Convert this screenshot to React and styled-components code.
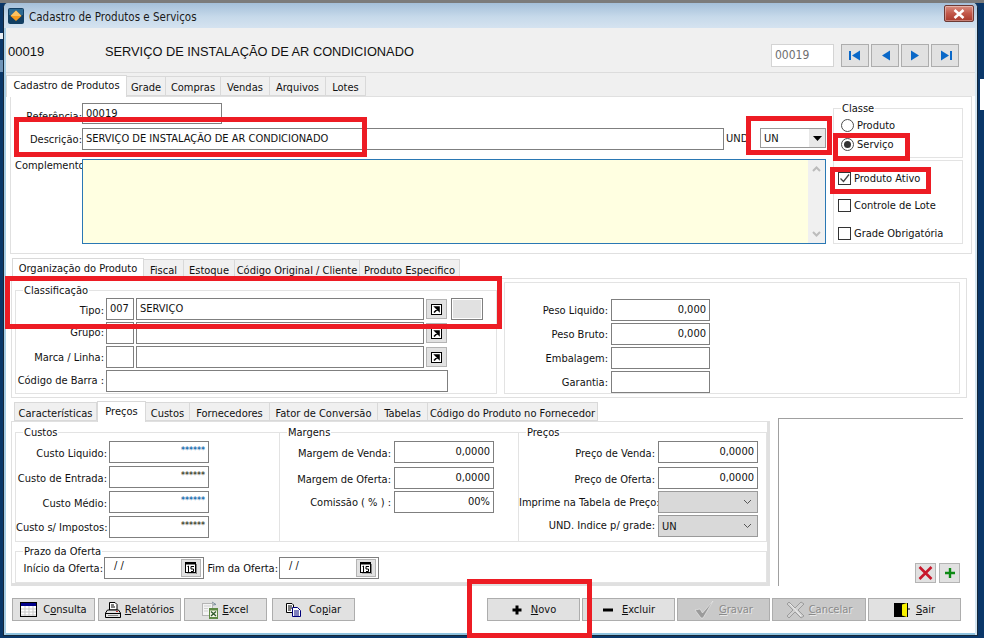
import React from "react";
import styled, { createGlobalStyle } from "styled-components";

const GlobalStyle = createGlobalStyle`
  html, body {
    margin: 0;
    padding: 0;
    overflow: hidden;
  }
  body {
    font-family: "DejaVu Sans Condensed", "DejaVu Sans", sans-serif;
    font-size: 11px;
    color: #111;
  }
`;

const Page = styled.div`
  position: relative;
  width: 984px;
  height: 638px;
  overflow: hidden;
  box-sizing: border-box;
  padding: 3px 0 0 3px;
  background:
    linear-gradient(#fff, #fff) 980px 79px / 4px 31px no-repeat,
    linear-gradient(#e8eef4, #e8eef4) 0 33px / 3px 6px no-repeat,
    linear-gradient(#6f94b8, #6f94b8) 0 60px / 3px 12px no-repeat,
    linear-gradient(#7b7b7b 3px, #0a3769 3px);
`;

const Win = styled.div`
  width: 975px;
  height: 633px;
  box-sizing: border-box;
  border: 1px solid #16283a;
  border-top: 0;
  background: #fff;
  display: flex;
  flex-direction: column;
  border-radius: 5px 5px 0 0;
  box-shadow: inset 2px 0 0 #a9cfe6, inset -2px 0 0 #d4e6f2, inset 0 -2px 0 #8fc3e0;
`;

const TitleBar = styled.div`
  height: 25px;
  flex: none;
  display: flex;
  align-items: center;
  padding: 0 3px 0 4px;
  border-radius: 5px 5px 0 0;
  background: linear-gradient(#a4bfd9, #c6d9ea 55%, #d5e3f0);
`;

const TitleText = styled.span`
  margin: 2px 0 0 5px;
  font-size: 11.5px;
  color: #1a1a1a;
  flex: 1;
`;

const CloseBtn = styled.div`
  width: 30px;
  height: 17px;
  margin-top: -4px;
  box-sizing: border-box;
  border: 1px solid #6d3a34;
  border-radius: 2px;
  background: linear-gradient(#d88e80, #c2584a 50%, #a83a2c);
  display: flex;
  align-items: center;
  justify-content: center;
  box-shadow: inset 0 0 0 1px rgba(255, 255, 255, 0.35);
`;

const Client = styled.div`
  flex: 1;
  margin: 0 2px 2px;
  display: flex;
  flex-direction: column;
  min-height: 0;
`;

const Header = styled.div`
  height: 45px;
  flex: none;
  box-sizing: border-box;
  display: flex;
  align-items: center;
  padding: 3px 16px 0 2px;
  background: #f0f0f0;
  border-bottom: 1px solid #dcdcdc;
`;

const Code = styled.span`
  width: 97px;
  font-family: "Liberation Sans", sans-serif;
  font-size: 13px;
`;

const ProductName = styled.span`
  flex: 1;
  font-family: "Liberation Sans", sans-serif;
  font-size: 12.8px;
`;

const RecordBox = styled.div`
  width: 63px;
  height: 23px;
  box-sizing: border-box;
  margin: 8px 7px 0 0;
  border: 1px solid #d4d4d4;
  background: #fff;
  color: #6e6e6e;
  font-size: 12px;
  line-height: 21px;
  padding-left: 3px;
`;

const NavGroup = styled.div`
  display: flex;
  gap: 2px;
  margin-top: 8px;
`;

const NavBtn = styled.div`
  width: 28px;
  height: 23px;
  box-sizing: border-box;
  border: 1px solid #adadad;
  background: #e1e1e1;
  display: flex;
  align-items: center;
  justify-content: center;
`;

const TabStrip = styled.div`
  flex: none;
  height: ${p => p.$h}px;
  margin-top: ${p => p.$top || 0}px;
  display: flex;
  align-items: flex-end;
  padding-left: ${p => p.$left || 0}px;
  background: ${p => p.$bg || "transparent"};
  position: relative;
  z-index: 1;
`;

const Tab = styled.div`
  width: ${p => p.$w}px;
  box-sizing: border-box;
  height: ${p => (p.$active ? p.$tall : p.$tall - 2)}px;
  margin-bottom: ${p => (p.$active ? -1 : 0)}px;
  padding-top: ${p => (p.$active ? 3 : 4)}px;
  border: 1px solid #d9d9d9;
  border-bottom: ${p => (p.$active ? "0" : "1px solid #d9d9d9")};
  border-left: ${p => (p.$active || p.$first ? "1px solid #d9d9d9" : "0")};
  background: ${p => (p.$active ? "#fff" : "#f0f0f0")};
  text-align: center;
  white-space: nowrap;
`;

const MainPanel = styled.div`
  flex: none;
  margin-left: 4px;
  width: 962px;
  height: 158px;
  box-sizing: border-box;
  border: 1px solid #e0e0e0;
  display: flex;
`;

const MainLeft = styled.div`
  width: 816px;
  flex: none;
`;

const MainRight = styled.div`
  width: 130px;
  margin: 11px 0 0 6px;
  flex: none;
`;

const Row = styled.div`
  display: flex;
  gap: ${p => (p.$gap === undefined ? 2 : p.$gap)}px;
  margin-top: ${p => p.$top || 0}px;
`;

const Label = styled.span`
  width: ${p => p.$w}px;
  flex: none;
  box-sizing: border-box;
  text-align: ${p => p.$left ? "left" : "right"};
  padding-left: ${p => (p.$left ? 4 : 0)}px;
  line-height: 14px;
  margin-top: ${p => (p.$dy === undefined ? 5 : p.$dy)}px;
  white-space: nowrap;
`;

const Field = styled.div`
  width: ${p => p.$w}px;
  height: ${p => p.$h || 22}px;
  flex: none;
  box-sizing: border-box;
  border: 1px solid #7f7f7f;
  margin-left: ${p => p.$mleft || 0}px;
  background: #fff;
  padding: 3px 3px 0;
  line-height: 14px;
  text-align: ${p => p.$right ? "right" : "left"};
  white-space: nowrap;
`;

const Stars = styled.span`
  display: block;
  margin-top: -2px;
  font-size: 8.5px;
  font-weight: bold;
  color: ${p => p.$color};
`;

const DropSelect = styled.div`
  width: ${p => p.$w}px;
  height: ${p => p.$h}px;
  flex: none;
  box-sizing: border-box;
  border: 1px solid #9a9a9a;
  background: ${p => p.$bg};
  display: flex;
  align-items: center;
  justify-content: space-between;
  padding: 0 ${p => p.$pad}px 0 3px;
`;

const BlackArrow = styled.div`
  width: 16px;
  height: 100%;
  background: #e8e8e8;
  display: flex;
  align-items: center;
  justify-content: center;
`;

const UndLabel = styled.span`
  width: 34px;
  flex: none;
  margin-top: 4px;
  line-height: 14px;
`;

const MemoRow = styled.div`
  display: flex;
  margin-top: 9px;
`;

const Memo = styled.div`
  width: 744px;
  height: 85px;
  box-sizing: border-box;
  border: 1px solid #2a78b4;
  background: #ffffe1;
  display: flex;
  justify-content: flex-end;
`;

const MemoScroll = styled.div`
  width: 17px;
  background: #f0f0f0;
  display: flex;
  flex-direction: column;
  justify-content: space-between;
  align-items: center;
  padding: 6px 0;
`;

const Group = styled.div`
  position: relative;
  box-sizing: border-box;
  width: ${p => (p.$w ? p.$w + "px" : "auto")};
  height: ${p => p.$h}px;
  flex: none;
  border: 1px solid #e3e3e3;
  margin-top: ${p => p.$top || 0}px;
  margin-left: ${p => p.$mleft || 0}px;
  padding-top: ${p => p.$pt || 0}px;
`;

const Legend = styled.span`
  position: absolute;
  top: -7px;
  left: 7px;
  background: #fff;
  padding: 0 1px;
  line-height: 13px;
`;

const Radio = styled.span`
  width: 13px;
  height: 13px;
  flex: none;
  box-sizing: border-box;
  border: 1px solid #4d4d4d;
  border-radius: 50%;
  background: #fff;
  display: flex;
  align-items: center;
  justify-content: center;
  &::after {
    content: "";
    width: 7px;
    height: 7px;
    border-radius: 50%;
    background: ${p => (p.$on ? "#333" : "transparent")};
  }
`;

const Check = styled.span`
  width: 13px;
  height: 13px;
  flex: none;
  box-sizing: border-box;
  border: 1px solid #333;
  background: #fff;
  display: flex;
  align-items: center;
  justify-content: center;
`;

const OptionRow = styled.div`
  display: flex;
  align-items: center;
  gap: 3px;
  margin-left: ${p => p.$x}px;
  margin-top: ${p => p.$top}px;
  line-height: 13px;
`;

const SubPanel = styled.div`
  flex: none;
  margin-left: 5px;
  width: 956px;
  height: 120px;
  box-sizing: border-box;
  border: 1px solid #e0e0e0;
  padding: 3px;
  display: flex;
  gap: 7px;
`;

const SmallBtn = styled.div`
  width: 21px;
  height: 20px;
  flex: none;
  box-sizing: border-box;
  margin-top: 1px;
  border: 1px solid #b4b4b4;
  background: #e1e1e1;
  display: flex;
  align-items: center;
  justify-content: center;
`;

const ColorBox = styled.div`
  width: 32px;
  height: 22px;
  flex: none;
  margin-left: 2px;
  box-sizing: border-box;
  border: 1px solid #7f7f7f;
  background: #e1e1e1;
  box-shadow: inset 0 0 0 1px #fff;
`;

const LowerArea = styled.div`
  flex: none;
  display: flex;
  margin: 2px 0 0 5px;
`;

const LowerLeft = styled.div`
  width: 759px;
  flex: none;
`;

const PricePanel = styled.div`
  height: 165px;
  box-sizing: border-box;
  border: 1px solid #e0e0e0;
  border-right-width: 3px;
  border-bottom-width: 3px;
  padding: 10px 0 0 3px;
`;

const PriceGroups = styled.div`
  display: flex;
`;

const PhotoBox = styled.div`
  width: 185px;
  height: 168px;
  flex: none;
  margin: 18px 0 0 8px;
  box-sizing: border-box;
  border-top: 1px solid #a0a0a0;
  border-left: 1px solid #a0a0a0;
  display: flex;
  align-items: flex-end;
  justify-content: flex-end;
  gap: 3px;
  padding: 0 3px 3px 0;
`;

const PhotoBtn = styled.div`
  width: 21px;
  height: 20px;
  box-sizing: border-box;
  border: 1px solid #b4b4b4;
  background: #e1e1e1;
  display: flex;
  align-items: center;
  justify-content: center;
`;

const DateField = styled.div`
  width: 100px;
  height: 22px;
  flex: none;
  box-sizing: border-box;
  border: 1px solid #7f7f7f;
  background: #fff;
  display: flex;
  justify-content: space-between;
  padding: 1px 2px 0 9px;
  line-height: 14px;
`;

const CalBtn = styled.div`
  width: 20px;
  height: 18px;
  box-sizing: border-box;
  border: 1px solid #b4b4b4;
  background: #e1e1e1;
  display: flex;
  align-items: center;
  justify-content: center;
`;

const Toolbar = styled.div`
  flex: none;
  display: flex;
  justify-content: space-between;
  margin-top: 12px;
  padding: 0 14px 0 6px;
`;

const BtnGroup = styled.div`
  display: flex;
  gap: ${p => p.$gap}px;
`;

const Btn = styled.div`
  width: ${p => p.$w || 93}px;
  height: 23px;
  margin-left: ${p => p.$mleft || 0}px;
  box-sizing: border-box;
  border: 1px solid #adadad;
  background: ${p => (p.$off ? "#c9c9c9" : "#e1e1e1")};
  color: ${p => (p.$off ? "#8a8a8a" : "#111")};
  text-shadow: ${p => (p.$off ? "1px 1px 0 #e8e8e8" : "none")};
  display: flex;
  align-items: center;
  justify-content: center;
  gap: ${p => p.$gap === undefined ? 5 : p.$gap}px;
`;

const Mark = styled.div`
  position: absolute;
  left: ${p => p.$x}px;
  top: ${p => p.$y}px;
  width: ${p => p.$w}px;
  height: ${p => p.$h}px;
  box-sizing: border-box;
  border: 5px solid #ed1c24;
  pointer-events: none;
  z-index: 5;
`;

const Svg = ({ w, h, children }) => (
  <svg width={w} height={h} viewBox={`0 0 ${w} ${h}`} style={{ display: "block", flex: "none" }}>
    {children}
  </svg>
);

const AppIcon = () => (
  <Svg w={16} h={16}>
    <rect width="16" height="16" rx="2" fill="#123f63" />
    <rect x="1" y="1" width="14" height="6" fill="#2d6a92" />
    <path d="M8 2.5 13.5 8 8 13 2.5 8Z" fill="#f59a1d" />
    <path d="M8 2.5 13.5 8H2.5Z" fill="#fbc160" />
  </Svg>
);

const CloseIcon = () => (
  <Svg w={12} h={10}>
    <path d="M1.5 1 10.5 9M10.5 1 1.5 9" stroke="#fff" strokeWidth="2.6" />
  </Svg>
);

const NavIcon = ({ dir, stop }) => (
  <Svg w={13} h={11}>
    {dir === "left" ? (
      <>
        {stop && <rect x="0" y="1" width="2" height="9" fill="#0a68c8" />}
        <path d="M3 5.5 11 .5V10.5Z" fill="#0a68c8" />
      </>
    ) : (
      <>
        <path d="M10 5.5 2 .5V10.5Z" fill="#0a68c8" />
        {stop && <rect x="11" y="1" width="2" height="9" fill="#0a68c8" />}
      </>
    )}
  </Svg>
);

const LookupIcon = () => (
  <Svg w={11} h={11}>
    <rect x=".5" y=".5" width="10" height="10" fill="#fff" stroke="#000" />
    <path d="M3 8.5 7.2 4.2M4.2 3H8V6.8Z" stroke="#000" strokeWidth="1.6" fill="#000" />
  </Svg>
);

const TriDown = () => (
  <Svg w={9} h={5}>
    <path d="M0 0H9L4.5 5Z" fill="#000" />
  </Svg>
);

const Chevron = () => (
  <Svg w={9} h={6}>
    <path d="M1 1 4.5 4.5 8 1" fill="none" stroke="#555" />
  </Svg>
);

const ScrollArrow = ({ up }) => (
  <Svg w={9} h={6}>
    <path d={up ? "M1 5 4.5 1.5 8 5" : "M1 1 4.5 4.5 8 1"} fill="none" stroke="#bcbcbc" strokeWidth="2" />
  </Svg>
);

const Tick = () => (
  <Svg w={11} h={11}>
    <path d="M1.5 5.5 4.5 8.5 10 1.5" fill="none" stroke="#444" strokeWidth="1.3" />
  </Svg>
);

const CalIcon = () => (
  <Svg w={12} h={12}>
    <rect x=".5" y=".5" width="10" height="10" fill="#fff" stroke="#000" />
    <rect x="0" y="0" width="11" height="2.5" fill="#000" />
    <path d="M2.5 4.5 3.5 4V10M6 4.5H9M6 4.5V7H8.5V9.5H6" fill="none" stroke="#000" />
    <path d="M11.5 2V12H2" fill="none" stroke="#808080" />
  </Svg>
);

const TableIcon = () => (
  <Svg w={17} h={15}>
    <rect x=".5" y=".5" width="16" height="14" fill="#fff" stroke="#000" />
    <rect x="1" y="1" width="15" height="3" fill="#00008a" />
    <path d="M1 7H16M1 10H16M1 13H16M5 4V14M9 4V14M13 4V14" stroke="#c9c9c9" />
  </Svg>
);

const PrinterIcon = () => (
  <Svg w={16} h={16}>
    <path d="M4.5.5H10L12 2.5V8H4.5Z" fill="#fff" stroke="#000" />
    <path d="M6 3H9M6 5H10" stroke="#000" />
    <path d="M2.5 8H13.5L15.5 11V15.5H.5V11Z" fill="#e4e4e4" stroke="#000" />
    <path d="M1 11.5H15" stroke="#000" />
    <path d="M11 9.5H13" stroke="#d03030" />
    <path d="M3 13.5H13" stroke="#888" />
  </Svg>
);

const ExcelIcon = () => (
  <Svg w={16} h={18}>
    <rect x=".5" y="2.5" width="10" height="12" fill="#f4f4f4" stroke="#b5b5b5" />
    <path d="M2 5H9M2 7.5H6M2 10H6" stroke="#cfcfcf" />
    <path d="M10 1 14 3.5 11 4" fill="none" stroke="#7d8f9e" />
    <rect x="7" y="7" width="9" height="11" fill="#5f8a45" />
    <rect x="8" y="9.5" width="7" height="6.5" fill="#f5f5e8" />
    <path d="M9 10.5 14 15M14 10.5 9 15" stroke="#2f5a2a" strokeWidth="1.3" />
  </Svg>
);

const CopyIcon = () => (
  <Svg w={15} h={14}>
    <path d="M.5.5H6L7.5 2V9.5H.5Z" fill="#fff" stroke="#000" />
    <path d="M2 3H6M2 5H6M2 7H5" stroke="#000" />
    <path d="M6.5 4.5H11.5L14.5 7.5V13.5H6.5Z" fill="#fff" stroke="#00007a" />
    <path d="M8 8H13M8 10H13M8 12H13" stroke="#00007a" />
  </Svg>
);

const PlusIcon = () => (
  <Svg w={12} h={12}>
    <path d="M6 1.5V10.5M1.5 6H10.5" stroke="#000" strokeWidth="3" />
  </Svg>
);

const MinusIcon = () => (
  <Svg w={12} h={12}>
    <path d="M1 6H11" stroke="#000" strokeWidth="3" />
  </Svg>
);

const GrayCheck = () => (
  <Svg w={21} h={19}>
    <path d="M1 10 6 9 8.5 13 19 1 9 18H7Z" fill="#9b9b9b" stroke="#ececec" strokeWidth=".6" />
  </Svg>
);

const GrayCross = () => (
  <Svg w={19} h={18}>
    <path d="M3 1 9 7 15 1 18 3 12 9 18 15 15 17 9 11 3 17 1 15 7 9 1 3Z" fill="#d0d0d0" stroke="#8f8f8f" strokeWidth=".8" />
    <path d="M4 3 15 15" stroke="#f3f3f3" />
  </Svg>
);

const DoorIcon = () => (
  <Svg w={16} h={14}>
    <rect x="0" y="0" width="13" height="14" fill="#000" />
    <path d="M8 1.5 13 0V14L8 12.5Z" fill="#f7f000" />
    <rect x="13" y="0" width="1" height="14" fill="#000" />
    <path d="M14 6H16" stroke="#000" />
  </Svg>
);

const RedX = () => (
  <Svg w={15} h={14}>
    <path d="M1.5 1 13.5 13M13.5 1 1.5 13" stroke="#c8182c" strokeWidth="2.6" />
  </Svg>
);

const GreenPlus = () => (
  <Svg w={12} h={12}>
    <path d="M6 1V11M1 6H11" stroke="#0d8a14" strokeWidth="2.4" />
  </Svg>
);

const mainTabs = [
  ["Cadastro de Produtos", 121, true],
  ["Grade", 39],
  ["Compras", 55],
  ["Vendas", 49],
  ["Arquivos", 56],
  ["Lotes", 40]
];

const subTabs = [
  ["Organização do Produto", 132, true],
  ["Fiscal", 40],
  ["Estoque", 51],
  ["Código Original / Cliente", 125],
  ["Produto Especifico", 100]
];

const priceTabs = [
  ["Características", 83],
  ["Preços", 49, true],
  ["Custos", 44],
  ["Fornecedores", 80],
  ["Fator de Conversão", 108],
  ["Tabelas", 50],
  ["Código do Produto no Fornecedor", 170]
];

const marks = [
  [14, 117, 353, 40],
  [746, 116, 86, 39],
  [833, 133, 77, 28],
  [830, 167, 101, 27],
  [5, 276, 497, 53],
  [467, 579, 125, 59]
];

const Tabs = ({ items, tall }) =>
  items.map(([text, w, active], i) => (
    <Tab key={text} $w={w} $active={active} $tall={tall} $first={i === 0}>
      {text}
    </Tab>
  ));

const App = () => (
  <Page>
    <GlobalStyle />
    <Win>
      <TitleBar>
        <AppIcon />
        <TitleText>Cadastro de Produtos e Serviços</TitleText>
        <CloseBtn>
          <CloseIcon />
        </CloseBtn>
      </TitleBar>
      <Client>
        <Header>
          <Code>00019</Code>
          <ProductName>SERVIÇO DE INSTALAÇÃO DE AR CONDICIONADO</ProductName>
          <RecordBox>00019</RecordBox>
          <NavGroup>
            <NavBtn><NavIcon dir="left" stop /></NavBtn>
            <NavBtn><NavIcon dir="left" /></NavBtn>
            <NavBtn><NavIcon dir="right" /></NavBtn>
            <NavBtn><NavIcon dir="right" stop /></NavBtn>
          </NavGroup>
        </Header>

        <TabStrip $h={23} $bg="#f0f0f0">
          <Tabs items={mainTabs} tall={22} />
        </TabStrip>
        <MainPanel>
          <MainLeft>
            <Row $top={6} $gap={0}>
              <Label $w={71} $dy={7}>Referência:</Label>
              <Field $w={140} $h={21}>00019</Field>
            </Row>
            <Row $top={4} $gap={0}>
              <Label $w={71}>Descrição:</Label>
              <Field $w={642}>SERVIÇO DE INSTALAÇÃO DE AR CONDICIONADO</Field>
              <Label $w={2} $dy={0} />
              <UndLabel>UND:</UndLabel>
              <DropSelect $w={66} $h={20} $bg="#fff" $pad={0}>
                UN
                <BlackArrow><TriDown /></BlackArrow>
              </DropSelect>
            </Row>
            <MemoRow>
              <Label $w={71} $left $dy={0}>Complemento:</Label>
              <Memo>
                <MemoScroll>
                  <ScrollArrow up />
                  <ScrollArrow />
                </MemoScroll>
              </Memo>
            </MemoRow>
          </MainLeft>
          <MainRight>
            <Group $h={50} $pt={3}>
              <Legend>Classe</Legend>
              <OptionRow $x={7} $top={7}><Radio />Produto</OptionRow>
              <OptionRow $x={7} $top={6}><Radio $on />Serviço</OptionRow>
            </Group>
            <Group $h={84} $top={2}>
              <OptionRow $x={4} $top={11}><Check><Tick /></Check>Produto Ativo</OptionRow>
              <OptionRow $x={4} $top={14}><Check />Controle de Lote</OptionRow>
              <OptionRow $x={4} $top={15}><Check />Grade Obrigatória</OptionRow>
            </Group>
          </MainRight>
        </MainPanel>

        <TabStrip $h={20} $left={6} $top={4}>
          <Tabs items={subTabs} tall={21} />
        </TabStrip>
        <SubPanel>
          <Group $w={482} $h={104} $pt={7} $top={8}>
            <Legend>Classificação</Legend>
            <Row>
              <Label $w={88} $dy={6}>Tipo:</Label>
              <Field $w={28}>007</Field>
              <Field $w={288}>SERVIÇO</Field>
              <SmallBtn><LookupIcon /></SmallBtn>
              <ColorBox />
            </Row>
            <Row $top={2}>
              <Label $w={88} $dy={4}>Grupo:</Label>
              <Field $w={28} />
              <Field $w={288} />
              <SmallBtn><LookupIcon /></SmallBtn>
            </Row>
            <Row $top={2}>
              <Label $w={88}>Marca / Linha:</Label>
              <Field $w={28} />
              <Field $w={288} />
              <SmallBtn><LookupIcon /></SmallBtn>
            </Row>
            <Row $top={2}>
              <Label $w={88} $dy={4}>Código de Barra :</Label>
              <Field $w={342} />
            </Row>
          </Group>
          <Group $w={456} $h={112} $pt={16}>
            <Row $gap={3}>
              <Label $w={103}>Peso Liquido:</Label>
              <Field $w={99} $right>0,000</Field>
            </Row>
            <Row $top={2} $gap={3}>
              <Label $w={103}>Peso Bruto:</Label>
              <Field $w={99} $right>0,000</Field>
            </Row>
            <Row $top={2} $gap={3}>
              <Label $w={103}>Embalagem:</Label>
              <Field $w={99} />
            </Row>
            <Row $top={2} $gap={3}>
              <Label $w={103}>Garantia:</Label>
              <Field $w={99} />
            </Row>
          </Group>
        </SubPanel>

        <LowerArea>
          <LowerLeft>
            <TabStrip $h={21} $left={3}>
              <Tabs items={priceTabs} tall={21} />
            </TabStrip>
            <PricePanel>
              <PriceGroups>
                <Group $w={265} $h={110} $pt={8}>
                  <Legend>Custos</Legend>
                  <Row>
                    <Label $w={91} $dy={6}>Custo Liquido:</Label>
                    <Field $w={100} $right><Stars $color="#1f6db0">******</Stars></Field>
                  </Row>
                  <Row $top={3}>
                    <Label $w={91} $dy={6}>Custo de Entrada:</Label>
                    <Field $w={100} $right><Stars $color="#4a4a3a">******</Stars></Field>
                  </Row>
                  <Row $top={3}>
                    <Label $w={91} $dy={6}>Custo Médio:</Label>
                    <Field $w={100} $right><Stars $color="#1f6db0">******</Stars></Field>
                  </Row>
                  <Row $top={3}>
                    <Label $w={89} $dy={5}>Custo s/ Impostos:</Label>
                    <Field $w={100} $right $mleft={2}><Stars $color="#4a4a3a">******</Stars></Field>
                  </Row>
                </Group>
                <Group $w={240} $h={110} $pt={8} $mleft={-1}>
                  <Legend>Margens</Legend>
                  <Row $gap={3}>
                    <Label $w={111} $dy={6}>Margem de Venda:</Label>
                    <Field $w={100} $right>0,0000</Field>
                  </Row>
                  <Row $top={4} $gap={3}>
                    <Label $w={111} $dy={6}>Margem de Oferta:</Label>
                    <Field $w={100} $right>0,0000</Field>
                  </Row>
                  <Row $top={2} $gap={3}>
                    <Label $w={111}>Comissão ( % ) :</Label>
                    <Field $w={100} $right>00%</Field>
                  </Row>
                </Group>
                <Group $w={249} $h={110} $pt={8} $mleft={-1}>
                  <Legend>Preços</Legend>
                  <Row $gap={3}>
                    <Label $w={136} $dy={6}>Preço de Venda:</Label>
                    <Field $w={100} $right>0,0000</Field>
                  </Row>
                  <Row $top={4} $gap={3}>
                    <Label $w={136} $dy={6}>Preço de Oferta:</Label>
                    <Field $w={100} $right>0,0000</Field>
                  </Row>
                  <Row $top={2} $gap={3}>
                    <Label $w={136}>Imprime na Tabela de Preço:</Label>
                    <DropSelect $w={100} $h={22} $bg="#d9d9d9" $pad={5}>
                      <span />
                      <Chevron />
                    </DropSelect>
                  </Row>
                  <Row $top={2} $gap={3}>
                    <Label $w={136} $dy={4}>UND. Indice p/ grade:</Label>
                    <DropSelect $w={100} $h={22} $bg="#d9d9d9" $pad={5}>
                      UN
                      <Chevron />
                    </DropSelect>
                  </Row>
                </Group>
              </PriceGroups>
              <Group $w={752} $h={32} $top={9}>
                <Legend>Prazo da Oferta</Legend>
                <Row $top={5} $gap={1}>
                  <Label $w={87}>Início da Oferta:</Label>
                  <DateField>
                    / /
                    <CalBtn><CalIcon /></CalBtn>
                  </DateField>
                  <Label $w={73}>Fim da Oferta:</Label>
                  <DateField>
                    / /
                    <CalBtn><CalIcon /></CalBtn>
                  </DateField>
                </Row>
              </Group>
            </PricePanel>
          </LowerLeft>
          <PhotoBox>
            <PhotoBtn><RedX /></PhotoBtn>
            <PhotoBtn><GreenPlus /></PhotoBtn>
          </PhotoBox>
        </LowerArea>

        <Toolbar>
          <BtnGroup $gap={3}>
            <Btn $w={83} $gap={6}><TableIcon /><span>C<u>o</u>nsulta</span></Btn>
            <Btn $w={83} $gap={4}><PrinterIcon /><span><u>R</u>elatórios</span></Btn>
            <Btn $w={83} $gap={4}><ExcelIcon /><span><u>E</u>xcel</span></Btn>
            <Btn $w={83} $mleft={2} $gap={8}><CopyIcon /><span>Co<u>p</u>iar</span></Btn>
          </BtnGroup>
          <BtnGroup $gap={2}>
            <Btn $gap={8}><PlusIcon /><span><u>N</u>ovo</span></Btn>
            <Btn $gap={8}><MinusIcon /><span><u>E</u>xcluir</span></Btn>
            <Btn $off $gap={4}><GrayCheck /><span><u>G</u>ravar</span></Btn>
            <Btn $off $w={94} $gap={4}><GrayCross /><span><u>C</u>ancelar</span></Btn>
            <Btn $gap={6}><DoorIcon /><span><u>S</u>air</span></Btn>
          </BtnGroup>
        </Toolbar>
      </Client>
    </Win>
    {marks.map(([x, y, w, h]) => (
      <Mark key={`${x}-${y}`} $x={x} $y={y} $w={w} $h={h} />
    ))}
  </Page>
);

export default App;
